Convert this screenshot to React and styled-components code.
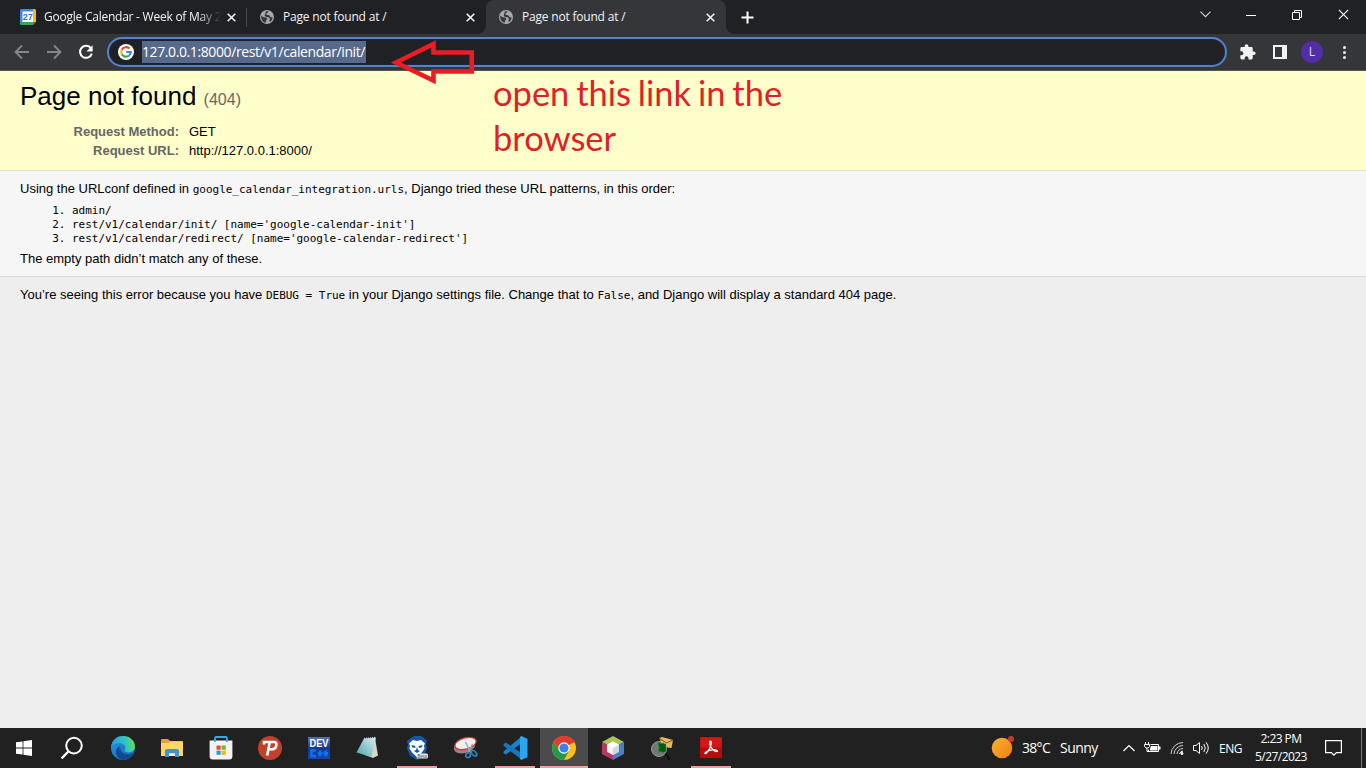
import React from "react";
import styled, { createGlobalStyle } from "styled-components";

const ui = `"Open Sans", "Noto Sans", sans-serif`;

const GlobalStyle = createGlobalStyle`
  * { box-sizing: border-box; }
  body { margin: 0; background: #eee; overflow: hidden; }
  svg { display: block; flex: none; }
`;

const Screen = styled.div`
  width: 1366px;
  height: 768px;
  display: flex;
  flex-direction: column;
  position: relative;
  overflow: hidden;
`;

/* ---------- browser chrome ---------- */
const TabStrip = styled.div`
  height: 34px;
  flex: none;
  display: flex;
  background: #202124;
  padding-left: 8px;
`;
const Tab = styled.div`
  width: ${(p) => (p.$active ? 240 : 239)}px;
  height: 34px;
  display: flex;
  align-items: center;
  padding: 0 11px 0 12px;
  position: relative;
  background: ${(p) => (p.$active ? "#35363a" : "transparent")};
  border-radius: 8px 8px 0 0;
  &::before, &::after {
    content: "";
    display: ${(p) => (p.$active ? "block" : "none")};
    position: absolute;
    bottom: 0;
    width: 8px;
    height: 8px;
  }
  &::before { left: -8px; background: radial-gradient(circle at 0 0, transparent 7.5px, #35363a 8px); }
  &::after { right: -8px; background: radial-gradient(circle at 100% 0, transparent 7.5px, #35363a 8px); }
`;
const TabTitle = styled.div`
  flex: 1;
  margin-left: 8px;
  margin-right: ${(p) => (p.$fade ? 4 : 8)}px;
  font: 12px/18px ${ui};
  letter-spacing: ${(p) => p.$track}px;
  color: #f1f3f4;
  white-space: nowrap;
  mask-image: ${(p) => (p.$fade ? "linear-gradient(90deg, #000 86%, transparent 99%)" : "none")};
`;
const TabDivider = styled.div`
  position: absolute;
  right: 0;
  top: 8px;
  width: 1px;
  height: 19px;
  background: #4a4c50;
`;
const NewTab = styled.div`
  margin-left: 15px;
  display: flex;
  align-items: center;
`;
const WindowButtons = styled.div`
  margin-left: auto;
  display: grid;
  grid-template-columns: 46px 46px 46px 46px;
  width: 184px;
  height: 29px;
  justify-items: center;
  align-items: center;
`;
const Toolbar = styled.div`
  height: 37px;
  flex: none;
  display: flex;
  align-items: center;
  background: #35363a;
  border-bottom: 1px solid #56564f;
  padding-left: 14px;
`;
const NavButtons = styled.div`
  display: flex;
  gap: 16px;
  width: 93px;
`;
const Omnibox = styled.div`
  width: 1120px;
  height: 30px;
  border-radius: 15px;
  border: 2px solid #5683c6;
  background: #202124;
  box-shadow: inset 0 0 0 1px #1a2744;
  display: flex;
  align-items: center;
  padding-left: 9px;
`;
const UrlText = styled.div`
  margin-left: 8px;
  width: 224px;
  height: 22px;
  background: #586a8c;
  color: #fff;
  font: 14px/21px ${ui};
  letter-spacing: -0.4px;
  white-space: nowrap;
`;
const Extras = styled.div`
  display: grid;
  grid-template-columns: repeat(4, 32px);
  align-items: center;
  justify-items: center;
  margin-left: 5px;
`;
const Avatar = styled.div`
  width: 22px;
  height: 22px;
  border-radius: 50%;
  background: #512da8;
  color: #e4dcf5;
  font: 12px/22px ${ui};
  text-align: center;
`;
const Kebab = styled.div`
  display: grid;
  gap: 2px;
  i { width: 3px; height: 3px; border-radius: 50%; background: #f1f3f4; }
`;

/* ---------- error page ---------- */
const Page = styled.main`
  flex: 1;
  background: #eee;
  font-family: "Liberation Sans", Arial, sans-serif;
  font-size: 13px;
  line-height: 15px;
  color: #000;
  code, ol { font-family: "DejaVu Sans Mono", monospace; font-size: 11px; letter-spacing: -0.02px; }
`;
const Summary = styled.header`
  height: 100px;
  background: #ffc;
  border-bottom: 1px solid #ddd;
  padding: 10px 20px;
`;
const Heading = styled.h1`
  font-weight: 400;
  font-size: 26px;
  line-height: 30px;
  margin: 0 0 9px;
  small { font-size: 16px; color: #666; }
`;
const Meta = styled.dl`
  margin: 0;
  display: grid;
  grid-template-columns: 159px 1fr;
  column-gap: 10px;
  row-gap: 4px;
  dt { font-weight: 700; color: #666; text-align: right; }
  dd { margin: 0; }
`;
const Info = styled.section`
  height: 106px;
  background: #f6f6f6;
  border-bottom: 1px solid #ddd;
  padding: 10px 20px;
  p { margin: 0; }
`;
const Patterns = styled.ol`
  margin: 7px 0 5px;
  padding-left: 52px;
  line-height: 14px;
`;
const Explanation = styled.section`
  padding: 10px 20px;
  p { margin: 0; }
`;

/* ---------- annotation over the page ---------- */
const Arrow = styled.svg`
  position: absolute;
  left: 390px;
  top: 38px;
`;
const Note = styled.div`
  position: absolute;
  left: 493px;
  top: 70px;
  width: 330px;
  font: 34.5px/45px Lato, Calibri, sans-serif;
  word-spacing: -2px;
  color: #e01f26;
`;

/* ---------- taskbar ---------- */
const Taskbar = styled.footer`
  height: 40px;
  flex: none;
  display: flex;
  background: #212121;
  color: #fff;
  font-family: ${ui};
`;
const Apps = styled.div`
  display: flex;
  gap: 1px;
`;
const AppCell = styled.div`
  width: ${(p) => p.$width || 48}px;
  height: 40px;
  display: flex;
  align-items: center;
  justify-content: center;
  background: ${(p) => (p.$active ? "#4b4b4b" : "transparent")};
  position: relative;
  margin-right: ${(p) => p.$gap || 0}px;
  &::after {
    content: "";
    display: ${(p) => (p.$open ? "block" : "none")};
    position: absolute;
    bottom: 0;
    left: ${(p) => (p.$active ? 0 : 4)}px;
    right: ${(p) => (p.$active ? 0 : 4)}px;
    height: 2px;
    background: #f49a9f;
  }
`;
const Tray = styled.div`
  margin-left: auto;
  width: 375px;
  display: flex;
  align-items: center;
`;
const Weather = styled.div`
  width: 132px;
  display: flex;
  align-items: center;
  font-size: 14px;
  line-height: 20px;
  letter-spacing: -0.55px;
  white-space: nowrap;
  span:first-of-type { width: 38px; margin-left: 7px; letter-spacing: -0.7px; }
`;
const TrayIcons = styled.div`
  width: 96px;
  display: flex;
  align-items: center;
  gap: 9px;
`;
const Language = styled.div`
  width: 31px;
  font-size: 12px;
  letter-spacing: -0.5px;
`;
const Clock = styled.div`
  width: 62px;
  margin-right: 3px;
  font-size: 12px;
  line-height: 18px;
  letter-spacing: -0.55px;
  text-align: center;
  white-space: nowrap;
`;
const ShowDesktop = styled.div`
  margin-left: auto;
  width: 5px;
  height: 40px;
  border-left: 1px solid #777;
`;

const Globe = () => (
  <svg width="16" height="16" viewBox="0 0 16 16">
    <circle cx="8" cy="8" r="7" fill="#a5a9ae" />
    <path d="M2.200 6.400 4.500 8.300l2.600.2 1.400 1.600-1.300 1.200-.2 2.300C4 13.500 2 11 2.200 6.400zM6.800 2.400 9.500 2l-.8 1.800-1.500.8.800 1.400 2.200.2 1.200 1.800 2.200.4c-.2 2-1.300 3.700-2.700 4.600l-.6-1.800.8-1.600-1.600-1.400-2.600-.2L5.600 6.600l.6-1.600z" fill="#35363a" />
  </svg>
);

const CalendarIcon = () => (
  <svg width="16" height="16" viewBox="0 0 16 16">
    <path d="M0 1.500Q0 0 1.500 0H13v3H3v13H1.500Q0 16 0 14.500z" fill="#4285f4" />
    <path d="M13 0h1.500Q16 0 16 1.500V13h-3z" fill="#fbbc04" />
    <path d="M1 13h12v3H1.500Q0 16 0 14z" fill="#34a853" />
    <path d="M13 13h3l-3 3z" fill="#ea4335" />
    <path d="M2.500 2.500h10.500v10.500H2.500z" fill="#fff" />
    <text x="7.800" y="11" fontSize="9" fontWeight="700" fontFamily="Liberation Sans, sans-serif" textAnchor="middle" fill="#2b6fe0">27</text>
  </svg>
);

const Cross = ({ size = 9, weight = 1.6 }) => (
  <svg width={size} height={size} viewBox="0 0 9 9">
    <path d="M.7.7l7.600 7.600M8.300.7.7 8.300" stroke="#f1f3f4" strokeWidth={weight} />
  </svg>
);

const GoogleG = () => (
  <svg width="16" height="16" viewBox="0 0 16 16">
    <circle cx="8" cy="8" r="8" fill="#fff" />
    <g fill="none" strokeWidth="2.200">
      <path d="M11.400 4.600A4.800 4.800 0 0 0 3.800 5.700" stroke="#ea4335" />
      <path d="M3.800 5.700a4.800 4.800 0 0 0 0 4.600" stroke="#fbbc05" />
      <path d="M3.800 10.300a4.800 4.800 0 0 0 7.300 1.200" stroke="#34a853" />
      <path d="M11.100 11.500A4.800 4.800 0 0 0 12.800 8H8.200" stroke="#4285f4" />
    </g>
  </svg>
);

const apps = [
  {
    name: "start", width: 47, icon: (
      <svg width="16" height="16" viewBox="0 0 16 16" fill="#fff">
        <path d="M0 2.300 6.600 1.400v6.100H0zM7.400 1.300 16 0v7.500H7.400zM0 8.400h6.600v6.200L0 13.700zM7.400 8.400H16V16l-8.600-1.300z" />
      </svg>
    ),
  },
  {
    name: "search", gap: 2, icon: (
      <svg width="24" height="24" viewBox="0 0 24 24" fill="none" stroke="#fff" strokeWidth="2">
        <circle cx="14" cy="9.600" r="7.800" />
        <path d="M8.600 15.200 1.600 22.400" strokeWidth="2.300" />
      </svg>
    ),
  },
  {
    name: "edge", icon: (
      <svg width="24" height="24" viewBox="0 0 24 24">
        <defs>
          <linearGradient id="edgeTop" x1="0" y1=".5" x2="1" y2=".3">
            <stop offset="0" stopColor="#2399e0" />
            <stop offset=".55" stopColor="#2fc1c8" />
            <stop offset="1" stopColor="#66dc50" />
          </linearGradient>
          <linearGradient id="edgeSide" x1="0" y1="0" x2="1" y2="1">
            <stop offset="0" stopColor="#1f9ae8" />
            <stop offset="1" stopColor="#1560b8" />
          </linearGradient>
        </defs>
        <circle cx="12" cy="12" r="12" fill="url(#edgeSide)" />
        <path d="M.1 11C.7 4.800 5.600 0 12 0c7 0 12 5 12 10.500 0 3.800-3 6-6.300 6-2.700 0-4.300-1.100-4.300-2 0-.6.900-1.100.9-2.700 0-2.300-2.300-4.500-5.800-4.500C4.600 7.300 1.500 8.500.1 11z" fill="url(#edgeTop)" />
        <path d="M8.800 10.200c-1.500 3.200.2 9.600 7.200 9.700 2.700 0 4.600-.8 6-1.600-2.100 3.600-5.700 5.700-10 5.700-4-.7-7-4-7-8 0-2.700 1.500-5 3.800-5.800z" fill="#114a94" />
        <path d="M9.500 10.500c-.7 2.700.3 7.400 7 8.100 2.300.2 4.500-.5 5.800-1.100l.2.600c-1.500.9-3.700 1.800-6.500 1.800-7-.1-8.700-6.500-6.500-9.400z" fill="#212121" opacity=".6" />
      </svg>
    ),
  },
  {
    name: "files", icon: (
      <svg width="22" height="20" viewBox="0 0 22 20">
        <path d="M0 2Q0 1 1 1h6l2 2h12q1 0 1 1v14H0z" fill="#e0a52e" />
        <path d="M0 5h7l2-1.500h13V18H0z" fill="#fbd669" />
        <path d="M4 19v-6q0-2 2-2h10q2 0 2 2v6h-4v-3.500H8V19z" fill="#3f93d1" />
        <path d="M8 18v-2.500h6V18z" fill="#fff0c0" />
      </svg>
    ),
  },
  {
    name: "store", icon: (
      <svg width="24" height="24" viewBox="0 0 24 24">
        <path d="M6 6V2.200Q6 1 7.200 1h9.600Q18 1 18 2.200V6" fill="none" stroke="#3aa5de" strokeWidth="1.800" />
        <path d="M.6 4.500h22.800v16q0 3-3 3H3.600q-3 0-3-3z" fill="#f3f3f3" />
        <path d="M6 3.500v2.500M18 3.500v2.500" stroke="#3aa5de" strokeWidth="1.800" />
        <path d="M7.500 9.500h4.200v4.200H7.500z" fill="#e8502f" />
        <path d="M12.600 9.500h4.200v4.200h-4.200z" fill="#77b82a" />
        <path d="M7.500 14.600h4.200v4.200H7.500z" fill="#209fdd" />
        <path d="M12.600 14.600h4.200v4.200h-4.200z" fill="#f7b617" />
      </svg>
    ),
  },
  {
    name: "psiphon", icon: (
      <svg width="24" height="24" viewBox="0 0 24 24">
        <circle cx="12" cy="12" r="12" fill="#c1422b" />
        <path d="M6 8.500V6h10q2.800 0 2.300 3.200-.6 4-3.800 4H11M11.800 6 9.200 19.500" fill="none" stroke="#fff" strokeWidth="2.600" />
      </svg>
    ),
  },
  {
    name: "devcpp", icon: (
      <svg width="22" height="22" viewBox="0 0 22 22">
        <defs>
          <linearGradient id="dev" x2="0" y2="1">
            <stop offset="0" stopColor="#5973b5" />
            <stop offset=".5" stopColor="#16398d" />
            <stop offset="1" stopColor="#1646ad" />
          </linearGradient>
        </defs>
        <rect width="22" height="22" fill="url(#dev)" />
        <text x="11" y="10" textAnchor="middle" fontSize="10" fontWeight="700" fontFamily="Liberation Sans, sans-serif" textLength="19" lengthAdjust="spacingAndGlyphs" fill="#fff">DEV</text>
        <path d="M8 13.500H3.500v5.800H8M9.800 16.400h4.600m-2.300-2.800v5.600M15.400 16.400H20m-2.300-2.800v5.600" stroke="#0b72f0" strokeWidth="2.600" fill="none" />
      </svg>
    ),
  },
  {
    name: "notepad", icon: (
      <svg width="24" height="24" viewBox="0 0 24 24">
        <defs>
          <linearGradient id="pad" x1="1" x2="0" y2="1">
            <stop offset="0" stopColor="#d6eef1" />
            <stop offset="1" stopColor="#4fa3ad" />
          </linearGradient>
        </defs>
        <path d="m19 2 3 17.500-5 2.500-8-3z" fill="#d9d6ca" />
        <path d="M8 2.500 20 1.500 15.500 21 .5 16.500z" fill="url(#pad)" />
        <path d="m8 2.500 12-1" stroke="#b7c9cc" strokeWidth="1.500" strokeDasharray="1 1" />
      </svg>
    ),
  },
  {
    name: "brave", open: true, icon: (
      <svg width="24" height="24" viewBox="0 0 24 24">
        <path d="M6 2 9 0h7l3 2 3 3-1 4 1 3-3 8-7 4-7-4L2 12l1-3-1-4z" fill="#1459a8" />
        <path d="m8 4 4 1 4-1 4 3.500-1 2 .5 3-3 4.500-4.500 4-4.500-4-3-4.500.5-3-1-2z" fill="#fff" />
        <path d="m6.500 9 4 1-.5 2-3-.8zM17.500 9l-4 1 .5 2 3-.8zM12 11l1 3 2 1-3 2-3-2 2-1z" fill="#1459a8" />
        <rect x="11.500" y="17.500" width="11.500" height="5" rx="1.500" fill="#e8e8e8" />
        <text x="17.200" y="21.500" textAnchor="middle" fontSize="4.500" fontFamily="Liberation Sans, sans-serif" fill="#555">Beta</text>
      </svg>
    ),
  },
  {
    name: "snip", icon: (
      <svg width="26" height="24" viewBox="0 0 26 24">
        <ellipse cx="11.500" cy="10.500" rx="11" ry="6.500" transform="rotate(-16 11.500 10.500)" fill="#a87d80" />
        <ellipse cx="12.500" cy="7.500" rx="11" ry="5.600" transform="rotate(-16 12.500 7.500)" fill="#f0eeee" stroke="#c9383c" strokeWidth="1.200" />
        <path d="m12.500 6 5.500 11M19.500 8l-4.500 9" stroke="#9aaab5" strokeWidth="1.400" />
        <circle cx="15" cy="19.300" r="2.300" fill="none" stroke="#2d83b5" strokeWidth="1.700" />
        <ellipse cx="21" cy="17.300" rx="3.300" ry="2" transform="rotate(45 21 17.300)" fill="none" stroke="#2d83b5" strokeWidth="1.700" />
      </svg>
    ),
  },
  {
    name: "vscode", open: true, icon: (
      <svg width="25" height="24" viewBox="0 0 25 24">
        <path d="m.5 15.500 18-15v6.800L3.200 18.300q-.5.300-1 0L.5 17z" fill="#1584cf" />
        <path d="m.5 8.500 1.700-1.700q.5-.4 1 0L18.500 17v6.600L.5 9.800z" fill="#1a75bd" />
        <path d="m18.300 0 6.200 2.800v18.400L18.300 24 17 23V1z" fill="#2aa5ee" />
      </svg>
    ),
  },
  {
    name: "chrome", open: true, active: true, icon: (
      <svg width="24" height="24" viewBox="0 0 24 24">
        <circle cx="12" cy="12" r="12" fill="#fbc116" />
        <path d="M12 12 1.610 6A12 12 0 0 1 22.390 6z" fill="#e33b2e" />
        <path d="M12 12V6.500h10.650A12 12 0 0 0 1.610 6L7.240 14.750z" fill="#e33b2e" />
        <path d="M1.610 6A12 12 0 0 0 12 24l5-9.250L12 17.500 7.240 14.750z" fill="#229a4c" />
        <circle cx="12" cy="12" r="5.700" fill="#fff" />
        <circle cx="12" cy="12" r="4.600" fill="#3f7fe8" />
      </svg>
    ),
  },
  {
    name: "netbeans", icon: (
      <svg width="22" height="24" viewBox="0 0 22 24">
        <path d="m11 0 11 6-11 6L0 6z" fill="#a9c551" />
        <path d="M0 6l11 6v12L0 18z" fill="#b7395f" />
        <path d="m22 6-11 6v12l11-6z" fill="#4a7fc0" />
        <path d="m11 5.500 6 3.200v7L11 19l-6-3.300v-7z" fill="#eef2f4" />
        <path d="m11 12 6-3.300v7L11 19z" fill="#cfd6dd" />
        <path d="m5 8.700 6-3.200 6 3.200-6 3.300z" fill="#fff" />
      </svg>
    ),
  },
  {
    name: "mailsearch", icon: (
      <svg width="24" height="24" viewBox="0 0 24 24">
        <path d="m15 16.500 4.500 7" stroke="#0c0c0c" strokeWidth="2.200" />
        <circle cx="9" cy="13" r="7.500" fill="#747875" stroke="#969a95" />
        <path d="m9.500 2 2.500-1 11 3-1.500 8-9-1z" fill="#e4b95e" />
        <path d="m9.500 2.500 7 4.500 6.500-3" fill="none" stroke="#785719" />
        <path d="m8 6 3 1.500 2-.5 3 1.500v7l-3 1-3-1-1.500 1L9 12z" fill="#07590f" stroke="#1c9c2b" strokeDasharray="1.500 1" />
      </svg>
    ),
  },
  {
    name: "acrobat", open: true, icon: (
      <svg width="22" height="22" viewBox="0 0 22 22">
        <rect width="22" height="21" rx="1" fill="#b90b0b" />
        <rect x=".5" y=".5" width="21" height="10" fill="#cf1a1a" />
        <path d="M10.500 4c-1.300 0-.8 3.500.2 5.500 1.500 2.800 4.300 5.300 6.300 5 1.600-.5-1-2.300-4.700-1.600-2.700.4-5.900 1.400-7 2.700-.9 1.300.4 1.600 1.500.2C8.500 13.800 10.500 10.500 11 7.600c.4-1.800.5-3.600-.5-3.600z" fill="none" stroke="#fff" strokeWidth="1.200" />
      </svg>
    ),
  },
];

export default function App() {
  return (
    <Screen>
      <GlobalStyle />
      <TabStrip>
        <Tab>
          <CalendarIcon />
          <TabTitle $fade $track={-0.24}>Google Calendar - Week of May 2</TabTitle>
          <Cross />
          <TabDivider />
        </Tab>
        <Tab>
          <Globe />
          <TabTitle $track={-0.2}>Page not found at /</TabTitle>
          <Cross />
        </Tab>
        <Tab $active>
          <Globe />
          <TabTitle $track={-0.2}>Page not found at /</TabTitle>
          <Cross />
        </Tab>
        <NewTab>
          <svg width="13" height="13" viewBox="0 0 13 13"><path d="M6.500.5v12M.5 6.500h12" stroke="#fff" strokeWidth="2" /></svg>
        </NewTab>
        <WindowButtons>
          <svg width="11" height="7" viewBox="0 0 11 7"><path d="m.5.7 5 5 5-5" fill="none" stroke="#d5d6d8" strokeWidth="1.100" /></svg>
          <svg width="10" height="10" viewBox="0 0 10 10"><path d="M0 5.500h10" stroke="#fff" /></svg>
          <svg width="10" height="10" viewBox="0 0 10 10"><path d="M.5 2.500h7v7h-7zM2.500 2.500v-2h7v7h-2" fill="none" stroke="#fff" /></svg>
          <Cross size={11} weight={1} />
        </WindowButtons>
      </TabStrip>

      <Toolbar>
        <NavButtons>
          <svg width="16" height="16" viewBox="0 0 16 16" fill="none" stroke="#85878b" strokeWidth="1.800"><path d="M15 8H2M8 1.500 1.500 8 8 14.500" /></svg>
          <svg width="16" height="16" viewBox="0 0 16 16" fill="none" stroke="#85878b" strokeWidth="1.800"><path d="M1 8h13M8 1.500 14.500 8 8 14.500" /></svg>
          <svg width="16" height="16" viewBox="0 0 16 16"><path d="M13 4.400A6 6 0 1 0 13.800 9.600" fill="none" stroke="#fff" strokeWidth="2" /><path d="M14.600 1.200v6.200H8.400z" fill="#fff" /></svg>
        </NavButtons>
        <Omnibox>
          <GoogleG />
          <UrlText>127.0.0.1:8000/rest/v1/calendar/init/</UrlText>
        </Omnibox>
        <Extras>
          <svg width="16" height="16" viewBox="1.500 .8 22 22" fill="#f1f3f4"><path d="M20.500 11H19V7a2 2 0 0 0-2-2h-4V3.500a2.500 2.500 0 0 0-5 0V5H4a2 2 0 0 0-2 2v3.800h1.500a2.700 2.700 0 0 1 0 5.400H2V20a2 2 0 0 0 2 2h3.800v-1.500a2.700 2.700 0 0 1 5.400 0V22H17a2 2 0 0 0 2-2v-4h1.500a2.500 2.500 0 0 0 0-5z" /></svg>
          <svg width="14" height="14" viewBox="0 0 14 14"><path d="M1 1h12v12H1z" fill="none" stroke="#f1f3f4" strokeWidth="2" /><path d="M9 0h5v14H9z" fill="#f1f3f4" /></svg>
          <Avatar>L</Avatar>
          <Kebab><i /><i /><i /></Kebab>
        </Extras>
      </Toolbar>

      <Page>
        <Summary>
          <Heading>Page not found <small>(404)</small></Heading>
          <Meta>
            <dt>Request Method:</dt>
            <dd>GET</dd>
            <dt>Request URL:</dt>
            <dd>http://127.0.0.1:8000/</dd>
          </Meta>
        </Summary>
        <Info>
          <p>Using the URLconf defined in <code>google_calendar_integration.urls</code>, Django tried these URL patterns, in this order:</p>
          <Patterns>
            <li>admin/</li>
            <li>rest/v1/calendar/init/ [name='google-calendar-init']</li>
            <li>rest/v1/calendar/redirect/ [name='google-calendar-redirect']</li>
          </Patterns>
          <p>The empty path didn’t match any of these.</p>
        </Info>
        <Explanation>
          <p>You’re seeing this error because you have <code>DEBUG = True</code> in your Django settings file. Change that to <code>False</code>, and Django will display a standard 404 page.</p>
        </Explanation>
      </Page>

      <Taskbar>
        <Apps>
          {apps.map((a) => (
            <AppCell key={a.name} $open={a.open} $active={a.active} $gap={a.gap} $width={a.width}>{a.icon}</AppCell>
          ))}
        </Apps>
        <Tray>
          <Weather>
            <svg width="24" height="24" viewBox="0 0 24 24">
              <defs><linearGradient id="sun" x2="1" y2="1"><stop offset="0" stopColor="#fbb62d" /><stop offset="1" stopColor="#ef7a1a" /></linearGradient></defs>
              <circle cx="11" cy="12" r="10.300" fill="url(#sun)" />
              <circle cx="20" cy="3" r="3" fill="#c93a32" />
            </svg>
            <span>38°C</span>
            <span>Sunny</span>
          </Weather>
          <TrayIcons>
            <svg width="12" height="8" viewBox="0 0 12 8"><path d="m.5 7 5.500-5.500L11.500 7" fill="none" stroke="#fff" strokeWidth="1.200" /></svg>
            <svg width="17" height="12" viewBox="0 0 17 12" fill="none" stroke="#fff"><path d="M6.500 2.500h8v7h-10V7.500" /><path d="M15 4.500h1.500v3H15z" fill="#fff" stroke="none" /><path d="M7 4h6.500v4.500H6V6.500z" fill="#fff" stroke="none" /><path d="M1.500 0v2M4.500 0v2M.5 2.500h5v2L4 6H2L.5 4.500zM3 6v3.500h2" /></svg>
            <svg width="14" height="14" viewBox="0 0 14 14" fill="none" stroke="#fff"><g opacity=".8"><path d="M1 13A12 12 0 0 1 13 1.500" /><path d="M4 13A9 9 0 0 1 13 4.500" /><path d="M7 13A6.500 6.500 0 0 1 13 7.500" /></g><path d="M9.500 13a4 4 0 0 1 3.500-3" /><circle cx="12" cy="12.500" r="1" fill="#fff" /></svg>
            <svg width="17" height="14" viewBox="0 0 17 14" fill="none" stroke="#fff"><path d="M.5 4.500H3L6.500 1.500v11L3 9.500H.5z" /><path d="M8.500 5q1.500 2 0 4M10.800 3q3 4 0 8" /><path d="M13 1.300q4.500 5.700 0 11.400" /></svg>
          </TrayIcons>
          <Language>ENG</Language>
          <Clock>2:23 PM<br />5/27/2023</Clock>
          <svg width="42" height="18" viewBox="0 0 42 18" fill="none" stroke="#fff" strokeWidth="1.200"><path d="M10.600 1.600h15.800v12h-5l-2.500 2.600-2.500-2.600h-5.800z" /></svg>
          <ShowDesktop />
        </Tray>
      </Taskbar>

      <Arrow width="90" height="50" viewBox="0 0 90 50">
        <path d="M6 24.500 43.500 6v8.500h38.300v19H43.500V42.500z" fill="none" stroke="#ea1c24" strokeWidth="4.600" />
      </Arrow>
      <Note>open this link in the browser</Note>
    </Screen>
  );
}
